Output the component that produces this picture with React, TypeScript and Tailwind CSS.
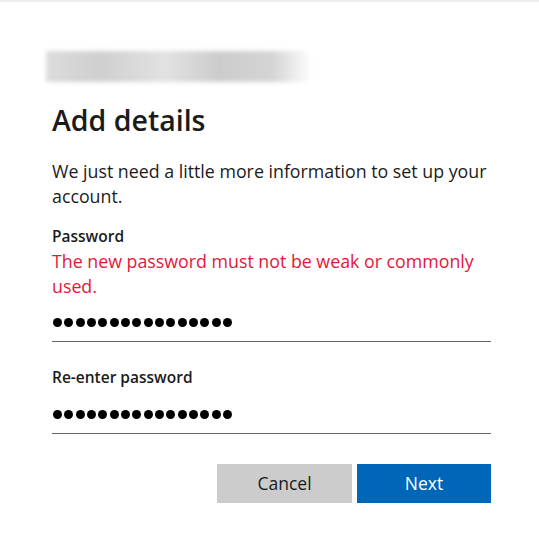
const font = { fontFamily: '"Open Sans", "Noto Sans", sans-serif' };

function Dots() {
  return (
    <div className="flex h-[30px] items-center gap-[2.33px] pl-[1px]">
      {Array.from({ length: 16 }).map((_, i) => (
        <span key={i} className="h-[9px] w-[9px] rounded-full bg-black" />
      ))}
    </div>
  );
}

export default function App() {
  return (
    <div className="min-h-[548px] w-[539px] bg-white text-[#1b1b1b]" style={font}>
      <div className="h-[2px] bg-[#efefef]" />
      <div className="pl-[52px] pr-[48px]">
        <div className="ml-[-6px] mt-[49px] h-[31px] w-[266px] bg-[linear-gradient(90deg,#dcdcdc_0%,#cfcfcf_20%,#e2e2e2_45%,#cccccc_65%,#d4d4d4_85%,#ffffff_100%)] blur-[2px]" />
        <h1 className="mt-[19px] text-[28.5px] font-semibold leading-[38px]">Add details</h1>
        <p className="mt-[20px] text-[17.8px] leading-[25px]">
          We just need a little more information to set up your account.
        </p>
        <div className="mt-[17px] text-[15.5px] font-semibold leading-[20px]">Password</div>
        <div className="mt-[3px] text-[17.8px] leading-[25px] text-[#e2173a]">
          The new password must not be weak or commonly used.
        </div>
        <div className="mt-[8px] border-b border-[#666666] pb-[4px]">
          <Dots />
        </div>
        <div className="mt-[25px] text-[15.5px] font-semibold leading-[20px]">Re-enter password</div>
        <div className="mt-[12px] border-b border-[#666666] pb-[4px]">
          <Dots />
        </div>
        <div className="mt-[30px] flex justify-end gap-[5px]">
          <button className="h-[39px] w-[135px] bg-[#cccccc] text-[17.5px] text-[#1b1b1b]">Cancel</button>
          <button className="h-[39px] w-[134px] bg-[#0067b8] text-[17.5px] text-white">Next</button>
        </div>
      </div>
    </div>
  );
}
